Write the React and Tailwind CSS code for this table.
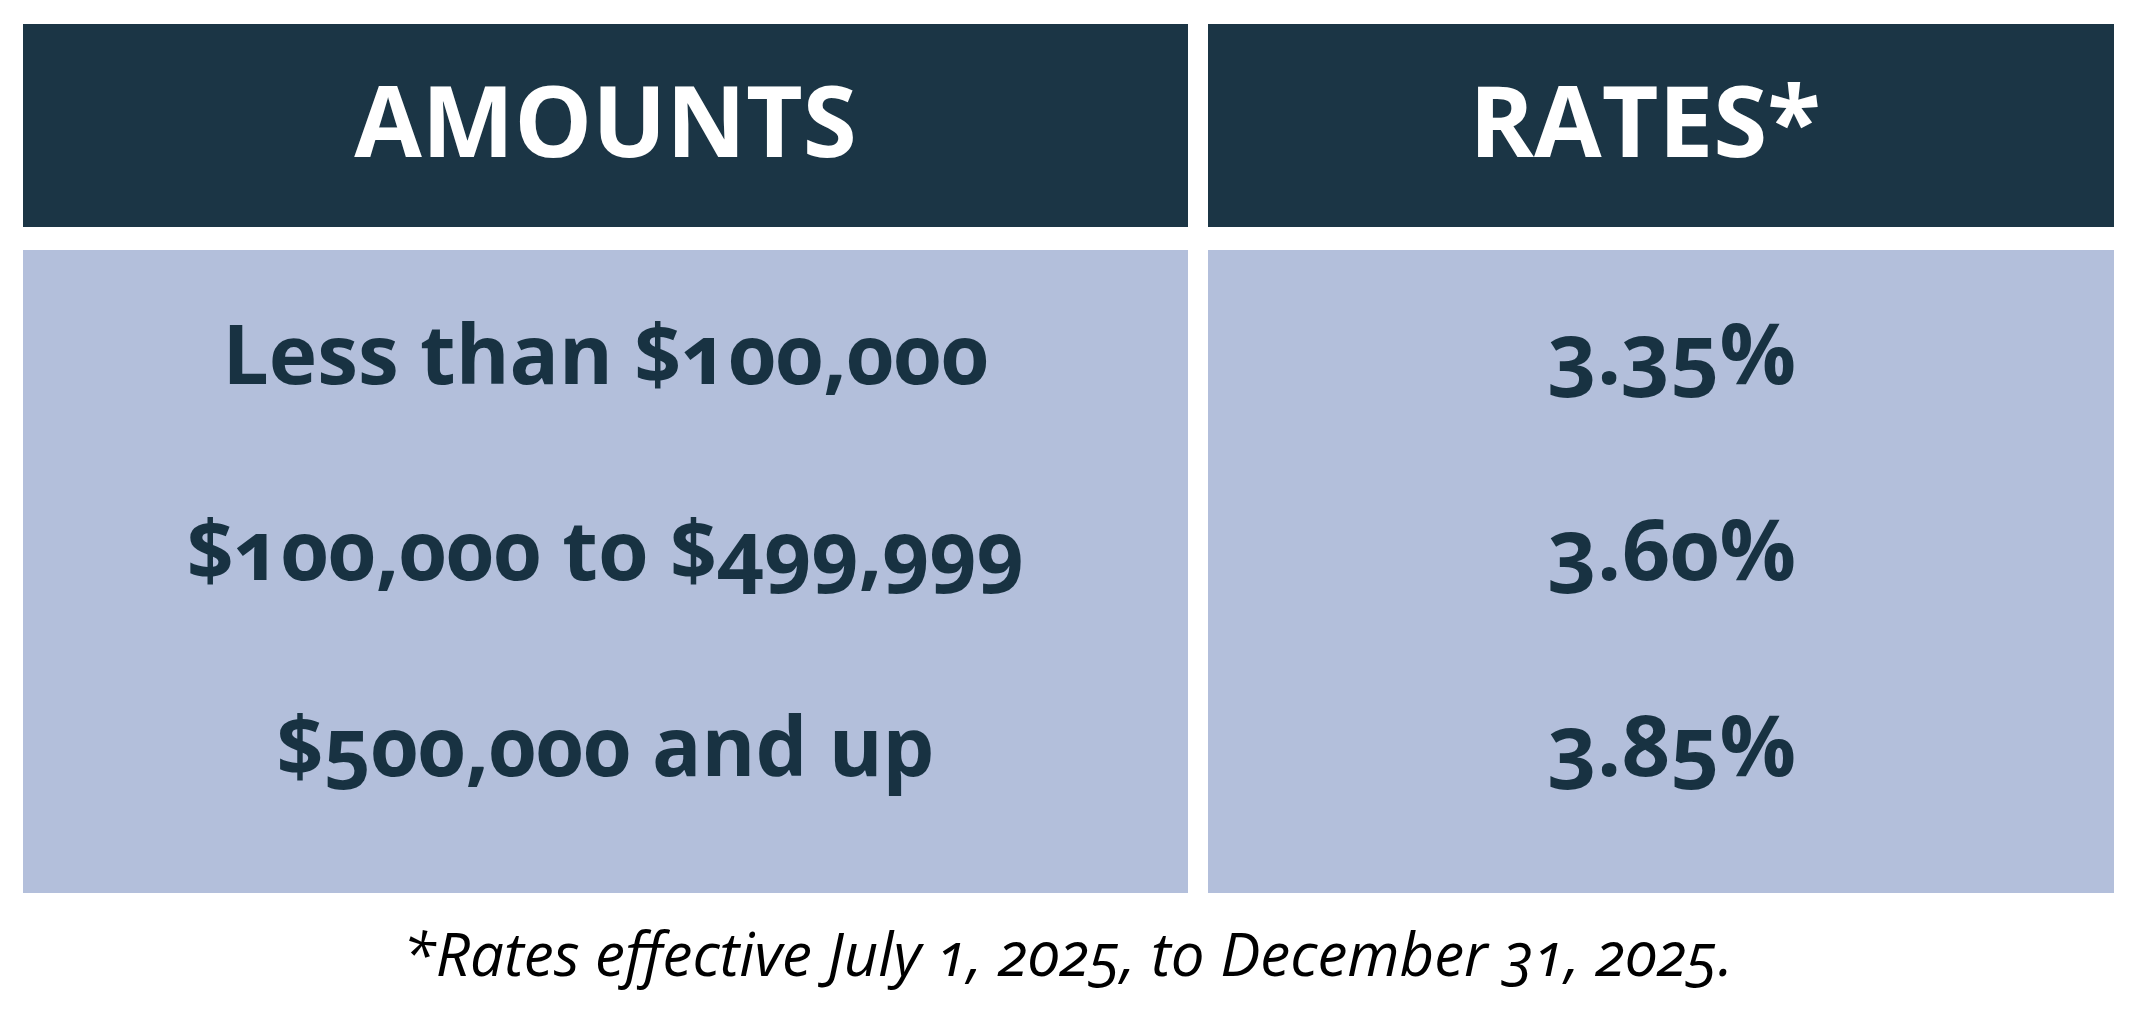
import React from 'react';

const rows = [
  { amount: 'Less than $100,000', rate: '3.35%' },
  { amount: '$100,000 to $499,999', rate: '3.60%' },
  { amount: '$500,000 and up', rate: '3.85%' },
];

export default function App() {
  return (
    <div
      className="w-[2136px] h-[1026px] bg-white flex flex-col"
      style={{ fontFamily: '"Open Sans", "Noto Sans", sans-serif' }}
    >
      <div className="grid grid-cols-[1165px_906px] gap-x-[20px] gap-y-[23px] pl-[23px] pt-[24px]">
        {/* Header */}
        <div className="h-[203px] bg-[#1b3545] flex items-center justify-center pb-[14px]">
          <span className="text-white font-bold text-[98px] leading-none">AMOUNTS</span>
        </div>
        <div className="h-[203px] bg-[#1b3545] flex items-center justify-center pb-[14px] pr-[32px]">
          <span className="text-white font-bold text-[98px] leading-none">RATES*</span>
        </div>

        {/* Body */}
        <div className="h-[643px] bg-[#b3bfdb] flex flex-col pt-[4px]">
          {rows.map((r) => (
            <div
              key={r.amount}
              className="h-[196px] flex items-center justify-center text-[#183242] font-bold text-[82px] oldstyle-nums"
            >
              {r.amount}
            </div>
          ))}
        </div>
        <div className="h-[643px] bg-[#b3bfdb] flex flex-col pt-[4px] pl-[22px]">
          {rows.map((r) => (
            <div
              key={r.rate}
              className="h-[196px] flex items-center justify-center text-[#183242] font-bold text-[85px] oldstyle-nums"
            >
              {r.rate}
            </div>
          ))}
        </div>
      </div>

      {/* Footnote */}
      <p className="mt-[30px] text-center italic text-black text-[60px] leading-none oldstyle-nums">
        *Rates effective July 1, 2025, to December 31, 2025.
      </p>
    </div>
  );
}
